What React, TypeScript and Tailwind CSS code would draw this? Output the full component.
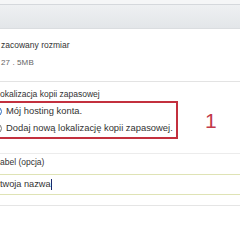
import React from "react";

export default function App() {
  return (
    <div className="w-[240px] h-[240px] overflow-hidden bg-white font-['Liberation_Sans',Arial,sans-serif] text-[#333] whitespace-nowrap">
      <div className="h-[4px] bg-[#f5f6f7]" />
      <div className="h-[25px] border-t border-b border-t-[#d5d8dc] border-b-[#dadde0] bg-gradient-to-b from-[#eef0f2] to-[#e3e6e9]" />
      <div className="mt-[11px] pl-[1px] text-[8.5px] leading-[11px]">zacowany rozmiar</div>
      <div className="mt-[7px] pl-[1px] text-[8px] leading-[10px] tracking-[0.1px] text-[#666]">27 . 5MB</div>
      <div className="mt-[13px] h-px bg-[#e3e3e3]" />
      <div className="mt-[7px] text-[8.5px] leading-[11px]">okalizacja kopii zapasowej</div>
      <div className="flex items-center">
        <div className="mt-[1px] -ml-[9px] w-[187px] border-2 border-[#c3303e]">
          <label className="flex items-center gap-[3px] h-[17px] text-[9.4px]">
            <span className="w-[9px] h-[9px] rounded-full border border-[#2b6cc4] bg-white flex items-center justify-center">
              <span className="w-[5px] h-[5px] rounded-full bg-[#2b6cc4]" />
            </span>
            <span className="ml-[1px]">Mój hosting konta.</span>
          </label>
          <label className="flex items-center gap-[3px] h-[17px] text-[9.4px]">
            <span className="w-[9px] h-[9px] rounded-full border border-[#777] bg-white" />
            <span className="ml-[1px]">Dodaj nową lokalizację kopii zapasowej.</span>
          </label>
        </div>
        <div className="ml-[27px] mt-[2px] text-[21px] leading-[24px] text-[#c23a4a]">1</div>
      </div>
      <div className="mt-[14px] h-px bg-[#ececec]" />
      <div className="mt-[3px] text-[8.5px] leading-[11px]">abel (opcja)</div>
      <div className="mt-[6px] h-[21px] border-t border-b border-[#dfe3b5] flex items-center text-[9.2px]">
        <span>twoja nazwa</span>
        <span className="w-px h-[11px] bg-[#1a2a6c]" />
      </div>
      <div className="mt-[10px] h-px bg-[#e5e5e5]" />
    </div>
  );
}
